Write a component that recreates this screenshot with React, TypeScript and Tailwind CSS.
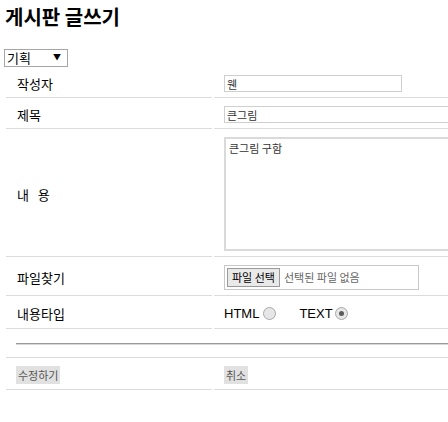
import React from 'react';

const kr = "font-['Noto_Sans_CJK_KR','Noto_Sans',sans-serif]";

function Radio({ checked }: { checked?: boolean }) {
  return (
    <span className="flex items-center justify-center w-[13px] h-[13px] rounded-full border border-[#a8a8a8] bg-[#e6e6e6]">
      {checked && <span className="w-[5px] h-[5px] rounded-full bg-[#5a5a5a]" />}
    </span>
  );
}

export default function App() {
  const label = 'pl-[11px] pt-[6px] pb-[5px] border-b border-[#dcdcdc] align-middle text-[13px] leading-[17px] text-black';
  const field = 'pl-[10px] pt-[6px] pb-[5px] border-b border-[#dcdcdc] align-middle leading-none';

  return (
    <div className={`w-[448px] h-[422px] overflow-hidden bg-white ${kr}`}>
      {/* Title */}
      <div className="pl-[5px] pt-[4px] h-[49px]">
        <h3 className="text-[20px] leading-[26px] font-bold text-black">게시판 글쓰기</h3>
      </div>

      {/* Category select */}
      <div className="pl-[4px] h-[18px]">
        <div className="relative w-[64px] h-[18px]">
          <select
            defaultValue="기획"
            className="appearance-none block w-full h-full border border-[#a6a6a6] bg-white pl-[2px] text-[13px] leading-[16px] text-black outline-none"
          >
            <option>기획</option>
            <option>개발</option>
            <option>디자인</option>
          </select>
          <span className="pointer-events-none absolute right-[7px] top-[4px] text-[8px] leading-none text-black">▼</span>
        </div>
      </div>

      {/* Form table */}
      <table className="ml-[4px] w-[560px] border-separate border-spacing-[2px]">
        <tbody>
          <tr>
            <td className={`${label} w-[206px]`}>작성자</td>
            <td className={field}>
              <input
                defaultValue="웬"
                className="block w-[178px] h-[17px] border border-[#cfcfcf] px-[2px] text-[11px] text-[#333] outline-none"
              />
            </td>
          </tr>
          <tr>
            <td className={label}>제목</td>
            <td className={field}>
              <input
                defaultValue="큰그림"
                className="block w-[300px] h-[17px] border border-[#cfcfcf] px-[2px] text-[11px] text-[#333] outline-none"
              />
            </td>
          </tr>
          <tr>
            <td className={label}>
              <span className="tracking-[3px]">내 용</span>
            </td>
            <td className={field}>
              <textarea
                defaultValue="큰그림 구함"
                className="block w-[300px] h-[114px] resize-none border-2 border-[#dadada] px-[3px] pt-[2px] text-[11px] leading-[14px] text-[#333] outline-none"
              />
            </td>
          </tr>
          <tr>
            <td className={label}>파일찾기</td>
            <td className={field}>
              <div className="flex items-center w-[195px] h-[25px] border border-[#c8c8c8] pl-[2px] gap-[4px]">
                <button className="h-[19px] px-[4px] border border-[#9a9a9a] bg-[#e9e9e9] text-[11px] leading-[17px] text-black">
                  파일 선택
                </button>
                <span className="text-[11px] text-[#666]">선택된 파일 없음</span>
              </div>
            </td>
          </tr>
          <tr>
            <td className={`${label} h-[31px]`}>내용타입</td>
            <td className={field}>
              <div className="flex items-center h-[19px] text-[13px] text-black font-['Liberation_Sans',sans-serif]">
                <span>HTML</span>
                <span className="ml-[4px]"><Radio /></span>
                <span className="ml-[23px]">TEXT</span>
                <span className="ml-[2px]"><Radio checked /></span>
              </div>
            </td>
          </tr>
          <tr>
            <td colSpan={2} className="pl-[10px] pt-[12px] pb-[12px] border-b border-[#dcdcdc] leading-none">
              <div className="h-[2px] border-t border-[#9a9a9a] border-b border-b-[#d8d8d8]" />
            </td>
          </tr>
          <tr>
            <td className="pl-[10px] pt-[6px] pb-[5px] border-b border-[#dcdcdc] leading-none">
              <button className="block h-[18px] px-[2px] bg-[#e1e1e1] text-[11px] leading-[18px] text-[#555]">
                수정하기
              </button>
            </td>
            <td className={field}>
              <button className="block h-[18px] px-[2px] bg-[#e1e1e1] text-[11px] leading-[18px] text-[#555]">
                취소
              </button>
            </td>
          </tr>
        </tbody>
      </table>
    </div>
  );
}
